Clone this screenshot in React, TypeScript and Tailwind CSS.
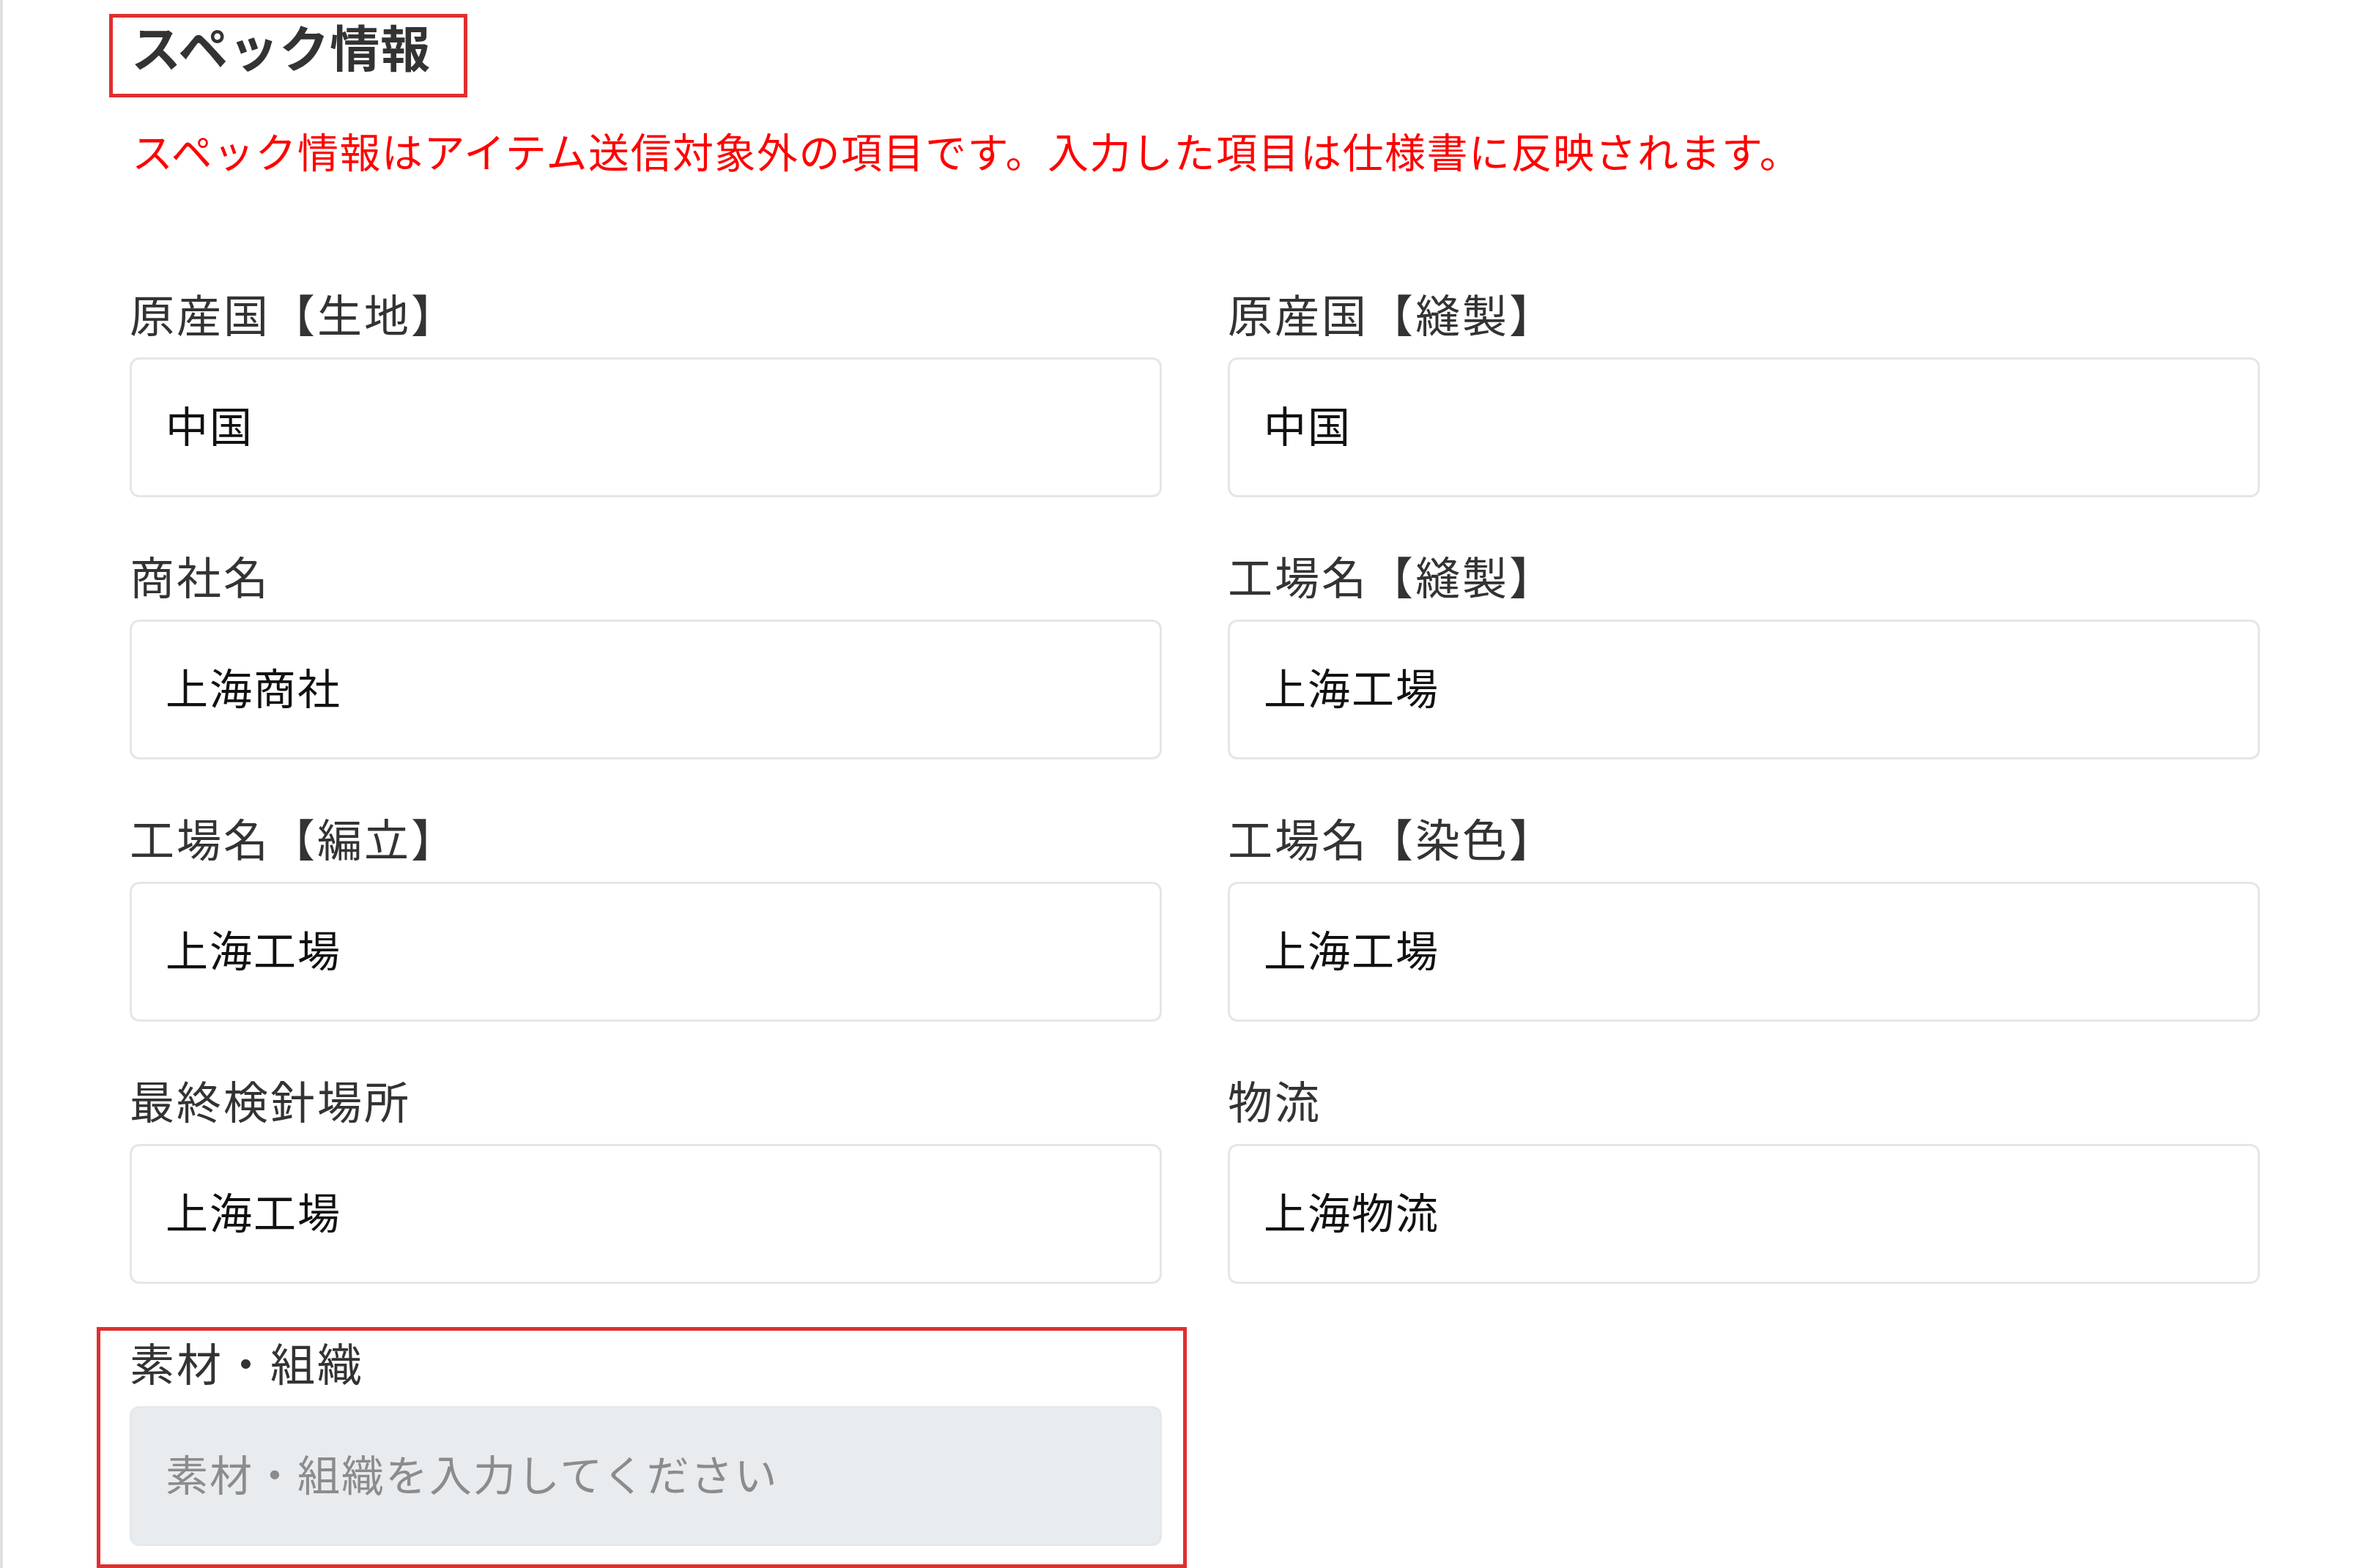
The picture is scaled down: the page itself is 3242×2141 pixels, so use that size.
import React from "react";

type Field = {
  label: string;
  value?: string;
  placeholder?: string;
  disabled?: boolean;
  highlight?: boolean;
};

const fields: Field[] = [
  { label: "原産国【生地】", value: "中国" },
  { label: "原産国【縫製】", value: "中国" },
  { label: "商社名", value: "上海商社" },
  { label: "工場名【縫製】", value: "上海工場" },
  { label: "工場名【編立】", value: "上海工場" },
  { label: "工場名【染色】", value: "上海工場" },
  { label: "最終検針場所", value: "上海工場" },
  { label: "物流", value: "上海物流" },
  {
    label: "素材・組織",
    placeholder: "素材・組織を入力してください",
    disabled: true,
    highlight: true,
  },
];

function SpecField({ field }: { field: Field }) {
  return (
    <div className="relative flex flex-col">
      <label className="text-[61px] leading-[87px] tracking-[3px] text-[#333333]">
        {field.label}
      </label>
      <input
        readOnly
        disabled={field.disabled}
        defaultValue={field.value}
        placeholder={field.placeholder}
        className={
          field.disabled
            ? "mt-[17px] h-[191px] w-full rounded-[13px] border-[3px] border-[#e5e8eb] bg-[#e9ecef] px-[46px] pb-[10px] text-[58px] tracking-[2px] text-[#111111] outline-none placeholder:text-[#8c8c8c]"
            : "mt-[17px] h-[191px] w-full rounded-[13px] border-[3px] border-[#e6e6e6] bg-white px-[46px] pb-[10px] text-[58px] tracking-[2px] text-[#111111] outline-none placeholder:text-[#8c8c8c]"
        }
      />
      {/* annotation frame drawn over the field */}
      {field.highlight && (
        <div className="pointer-events-none absolute -top-[4px] -right-[34px] -bottom-[30px] -left-[45px] border-[5px] border-[#e02f2f]" />
      )}
    </div>
  );
}

export default function App() {
  return (
    <main className="min-h-screen w-full bg-white font-['Noto_Sans_CJK_JP',sans-serif]">
      <section className="border-l-4 border-[#e0e0e0] pb-[30px] pl-[173px] pr-[157px]">
        {/* Title + annotation frame */}
        <div className="pt-[12px]">
          <div className="relative ml-[2px] inline-block">
            <h2 className="text-[68px] font-bold leading-[102px] tracking-[1px] text-[#333333]">
              スペック情報
            </h2>
            <div className="pointer-events-none absolute top-[7px] -right-[50px] -bottom-[19px] -left-[30px] border-[5px] border-[#e02f2f]" />
          </div>
        </div>

        <p className="ml-[3px] mt-[49px] text-[56px] leading-[84px] tracking-[1.5px] text-[#ff0000]">
          スペック情報はアイテム送信対象外の項目です。入力した項目は仕様書に反映されます。
        </p>

        {/* Spec fields */}
        <div className="mt-[137px] grid grid-cols-2 gap-x-[90px] gap-y-[63px]">
          {fields.map((field) => (
            <SpecField key={field.label} field={field} />
          ))}
        </div>
      </section>
    </main>
  );
}
